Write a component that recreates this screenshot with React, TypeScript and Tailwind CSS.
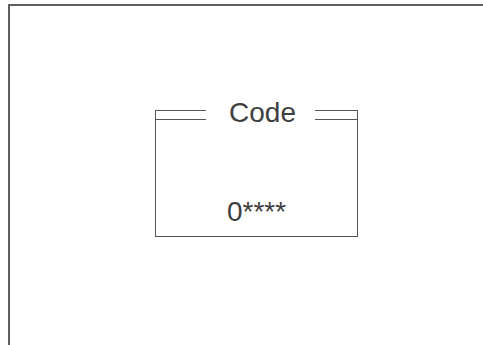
const App: React.FC = () => {
  return (
    <div
      className="h-[345px] w-[483px] overflow-hidden bg-white pl-[8px] pt-[4px] text-[#3f3f3f]"
      style={{ fontFamily: '"Liberation Sans", Arial, sans-serif' }}
    >
      <div className="h-[360px] w-[490px] border-l-2 border-t-2 border-[#5f5f5f]">
        <div className="ml-[145px] mt-[93px] w-[203px]">
          <div className="flex h-[21px] items-start">
            <div className="mt-[11px] h-[10px] w-[51px] border-b border-l border-t border-[#555]" />
            <span className="flex-1 pl-[4px] text-center text-[28px] leading-[28px]">
              Code
            </span>
            <div className="mt-[11px] h-[10px] w-[43px] border-b border-r border-t border-[#555]" />
          </div>
          <div className="h-[117px] border-b border-l border-r border-[#555] pt-[78px] text-center text-[28px] leading-[28px]">
            0****
          </div>
        </div>
      </div>
    </div>
  );
};

export default App;
